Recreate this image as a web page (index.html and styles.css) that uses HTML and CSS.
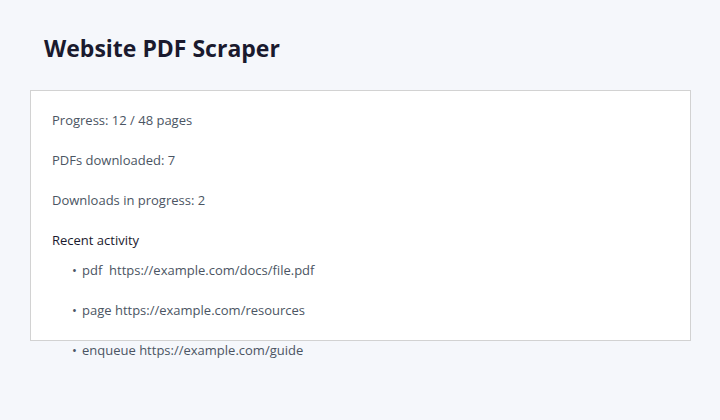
FILE: index.html
```html
<!DOCTYPE html>
<html lang="en">
<head>
<meta charset="utf-8">
<title>Website PDF Scraper</title>
<link rel="stylesheet" href="styles.css">
</head>
<body>
<main class="page">
  <h1 class="title">Website PDF Scraper</h1>
  <section class="panel">
    <p class="stat">Progress: 12 / 48 pages</p>
    <p class="stat">PDFs downloaded: 7</p>
    <p class="stat">Downloads in progress: 2</p>
    <h2 class="subtitle">Recent activity</h2>
    <ul class="activity">
      <li class="entry"><span class="bullet">•</span><span>pdf&nbsp; https://example.com/docs/file.pdf</span></li>
      <li class="entry"><span class="bullet">•</span><span>page https://example.com/resources</span></li>
      <li class="entry"><span class="bullet">•</span><span>enqueue https://example.com/guide</span></li>
    </ul>
  </section>
</main>
</body>
</html>
```
FILE: styles.css
```css
* {
  box-sizing: border-box;
}

body {
  margin: 0;
  background: #f5f7fb;
  color: #4b5563;
  font-family: "Segoe UI", "Open Sans", "Noto Sans", sans-serif;
  font-size: 13px;
  line-height: 20px;
}

.page {
  padding: 30px 29px 30px 30px;
}

.title {
  margin: 0 0 24px;
  padding-left: 14px;
  color: #1a1a2e;
  font-size: 23px;
  font-weight: 700;
  line-height: 36px;
}

.panel {
  padding: 19px 21px 0;
  border: 1px solid #d2d2d2;
  background: #fff;
}

.stat {
  margin: 0 0 20px;
}

.subtitle {
  margin: 0 0 10px;
  color: #1a1a2e;
  font-size: 13px;
  font-weight: 400;
}

/* The last entry hangs below the bottom edge of the panel. */
.activity {
  display: grid;
  gap: 20px;
  margin: 0 0 -20px;
  padding: 0 0 0 20px;
  list-style: none;
}

.entry {
  display: flex;
}

.bullet {
  width: 10px;
}
```
